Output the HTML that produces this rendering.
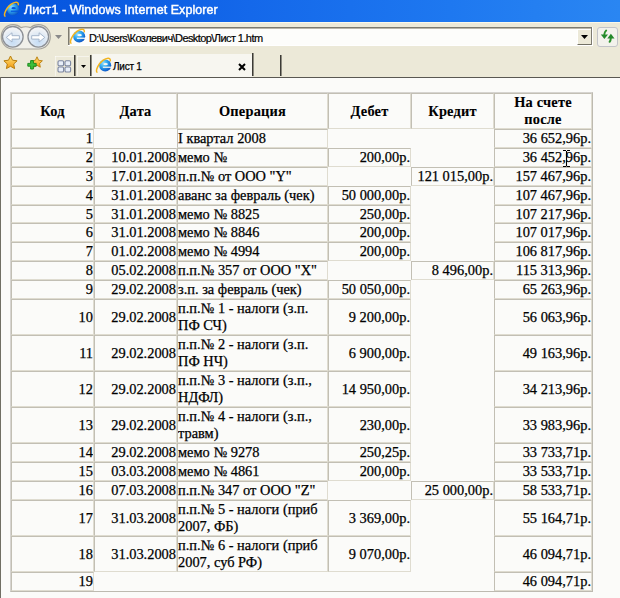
<!DOCTYPE html>
<html><head><meta charset="utf-8">
<style>
html,body{margin:0;padding:0}
body{width:620px;height:598px;overflow:hidden;position:relative;background:#fbfbf9;font-family:"Liberation Sans",sans-serif}
.abs{position:absolute}
#title{left:0;top:0;width:620px;height:22px;background:linear-gradient(90deg,#0554de 0px,#0858e0 70px,#1468ea 250px,#1e78f0 450px,#2a86f2 620px)}
#title .t{left:24px;top:2px;color:#fff;font-weight:normal;-webkit-text-stroke:0.45px #fff;font-size:13px;letter-spacing:0.07px;white-space:nowrap;transform:scaleX(0.96);transform-origin:0 0}
#tb{left:0;top:22px;width:620px;height:55px;background:#ece9d8}
#hl{left:0;top:22px;width:620px;height:1px;background:#fbf8e8}
#frameTop{left:0;top:77px;width:620px;height:1px;background:#5a5852}
#frameLeft{left:0;top:77px;width:1px;height:521px;background:#716f64}
#addr{left:68px;top:27px;width:525px;height:20px;box-sizing:border-box;background:#fdfdfc;border-top:1px solid #7a776a;border-left:1px solid #7a776a;border-bottom:1px solid #fff;border-right:1px solid #fff}
#addrIn{left:69px;top:28px;width:523px;height:17px;box-sizing:border-box;border-top:1px solid #a9a69a;border-left:1px solid #a9a69a}
#addr .t{left:18px;top:3px;font-size:11px;color:#000;white-space:nowrap}
#dd{left:577px;top:29px;width:15px;height:16px;box-sizing:border-box;background:#ece9d8;border-right:1px solid #716f64;border-bottom:1px solid #716f64;border-top:1px solid #fff;border-left:1px solid #fff}
#go{left:598px;top:27px;width:19px;height:20px;box-sizing:border-box;border:1px solid #b8b5a8;border-radius:3px;background:#f4f3ee}
#tab{left:92px;top:54px;width:160px;height:23px;background:#f7f6f0}
#tab .t{left:21px;top:7px;font-size:10px;letter-spacing:-0.25px;color:#000;-webkit-text-stroke:0.25px #000;white-space:nowrap}
.sep{background:#3c3b36;width:1px;border-right:1px solid #8d8b80}
table{position:absolute;left:10px;top:92px;border-collapse:separate;border-spacing:0;empty-cells:hide;border:1px solid;border-color:#d6d4d0 #bdbab0 #bdbab0 #d6d4d0;table-layout:fixed;font-family:"Liberation Serif",serif;font-size:14.4px;color:#000;-webkit-text-stroke:0.25px #000}
td{border:1px solid;border-color:#c2bfb4 #dfdcd0 #dfdcd0 #c2bfb4;padding:0;line-height:17px;text-align:right;vertical-align:middle;overflow:hidden;white-space:nowrap}
td.l{text-align:left;white-space:normal}
th{letter-spacing:0.2px;-webkit-text-stroke:0.1px #000;border:1px solid;border-color:#c2bfb4 #dfdcd0 #dfdcd0 #c2bfb4;padding:0;line-height:17px;text-align:center;font-weight:bold}
tr.s td{height:17px}
tr.d td{height:34px}
tr.s5 td{height:16px;line-height:16px}
tr.h th{height:34px}
</style></head><body>
<svg width="0" height="0" style="position:absolute">
<defs>
<radialGradient id="ieg" cx="0.35" cy="0.3" r="0.75">
<stop offset="0" stop-color="#8fe0ff"/><stop offset="0.45" stop-color="#2fa6ee"/><stop offset="1" stop-color="#0a4fc4"/>
</radialGradient>
<radialGradient id="bg" cx="0.5" cy="0.75" r="0.65">
<stop offset="0" stop-color="#c6ddf5"/><stop offset="0.55" stop-color="#dde8f4"/><stop offset="1" stop-color="#f3f4f6"/>
</radialGradient>
<linearGradient id="starg" x1="0" y1="0" x2="0" y2="1">
<stop offset="0" stop-color="#ffe27a"/><stop offset="1" stop-color="#f39a10"/>
</linearGradient>
<mask id="iem" maskUnits="userSpaceOnUse" x="0" y="0" width="16" height="16">
<rect width="16" height="16" fill="#fff"/>
<ellipse cx="10.0" cy="7.7" rx="2.1" ry="1.05" fill="#000"/>
<rect x="7.4" y="10.0" width="9" height="1.15" fill="#000"/>
</mask>

</defs></svg>
<div id="title" class="abs">
  <svg class="abs" style="left:3px;top:0px" width="17" height="17" viewBox="0 0 16 16">
<circle cx="9.6" cy="9.0" r="5.7" fill="url(#ieg)" mask="url(#iem)"/>
<path d="M1.8 15.2C0.4 13.4 3.2 7.4 7.4 4.2 10.8 1.6 14.6 1.0 14.4 4.4" fill="none" stroke="#f4b41e" stroke-width="1.4" stroke-linecap="round"/>
</svg>
  <div class="abs t">Лист1 - Windows Internet Explorer</div>
</div>
<div id="tb" class="abs"></div>
<div id="hl" class="abs"></div>
<svg class="abs" style="left:0;top:23px" width="54" height="28" viewBox="0 0 54 28">
  <path d="M13 1.6C16.5 1.6 19.5 3.2 21 4.6 23.5 3.7 28 3.7 30.5 4.6 32 3.2 35 1.6 38.6 1.6 45.3 1.6 50.3 7 50.3 13.8 50.3 20.6 45.3 26 38.6 26H13C6.3 26 1.3 20.6 1.3 13.8 1.3 7 6.3 1.6 13 1.6z" fill="#f1f0ea" stroke="#a6a49c" stroke-width="1.2"/>
  <circle cx="12.8" cy="13.8" r="10.3" fill="url(#bg)" stroke="#8c9096" stroke-width="1.3"/>
  <circle cx="38.3" cy="13.8" r="10.3" fill="url(#bg)" stroke="#8c9096" stroke-width="1.3"/>
  <path d="M6.3 14.4L12 9.8V12.7H19.4V16.1H12V19Z" fill="#ffffff" stroke="#9fb0c6" stroke-width="0.9" stroke-linejoin="round"/>
  <path d="M44.8 14.4L39.1 9.8V12.7H31.7V16.1H39.1V19Z" fill="#ffffff" stroke="#9fb0c6" stroke-width="0.9" stroke-linejoin="round"/>
</svg>
<svg class="abs" style="left:55px;top:35px" width="7" height="5"><path d="M0 0h7l-3.5 4z" fill="#8a8a8a"/></svg>
<div class="abs" style="left:68px;top:27px;width:525px;height:19px;background:#fff"></div>
<div class="abs" style="left:68px;top:27px;width:524px;height:1px;background:#7d7b70"></div>
<div class="abs" style="left:68px;top:27px;width:1px;height:18px;background:#7d7b70"></div>
<div class="abs" style="left:69px;top:28px;width:522px;height:1px;background:#b9b6aa"></div>
<div class="abs" style="left:69px;top:28px;width:1px;height:17px;background:#b9b6aa"></div>
<div class="abs" style="left:591px;top:27px;width:1px;height:18px;background:#7d7b70"></div>
<div class="abs" style="left:70px;top:29px;width:507px;height:16px;background:#fdfdfb"></div>
<svg class="abs" style="left:69px;top:27px" width="17" height="17" viewBox="0 0 16 16">
<circle cx="9.6" cy="9.0" r="5.7" fill="url(#ieg)" mask="url(#iem)"/>
<path d="M1.8 15.2C0.4 13.4 3.2 7.4 7.4 4.2 10.8 1.6 14.6 1.0 14.4 4.4" fill="none" stroke="#f4b41e" stroke-width="1.4" stroke-linecap="round"/>
</svg>
<div class="abs" style="left:89px;top:32px;font-size:11px;letter-spacing:-0.58px;white-space:nowrap;color:#000;-webkit-text-stroke:0.2px #000">D:\Users\Козлевич\Desktop\Лист 1.htm</div>
<div class="abs" style="left:577px;top:29px;width:14px;height:16px;box-sizing:border-box;background:#ece9d8;border-left:1px solid #fff;border-top:1px solid #fff;border-bottom:1px solid #716f64"></div>
<svg class="abs" style="left:581px;top:35px" width="8" height="5"><path d="M0 0h7l-3.5 4z" fill="#000"/></svg>
<div class="abs" style="left:597px;top:27px;width:21px;height:20px;box-sizing:border-box;border:1px solid #c3c4c8;border-radius:3px;background:#f3f2ec"></div>
<svg class="abs" style="left:599px;top:29px" width="17" height="16" viewBox="0 0 17 16">
  <path d="M7.2 1.6C6.2 2.4 5.5 3.6 5.3 5.4" fill="none" stroke="#2a922a" stroke-width="1.9" stroke-linecap="round"/>
  <path d="M1.8 5.6h7.2l-3.6 4.5z" fill="#23882a"/>
  <path d="M10.6 12.8C11.2 12.1 11.7 11 11.8 9.2" fill="none" stroke="#2a922a" stroke-width="2" stroke-linecap="round"/>
  <path d="M8.3 9.4h7.2l-3.6-4.7z" fill="#23882a"/>
</svg>
<svg class="abs" style="left:3px;top:55px" width="15" height="15" viewBox="0 0 15 15">
  <path d="M7.5 1l2 4.2 4.6.6-3.4 3.2.9 4.6-4.1-2.3-4.1 2.3.9-4.6L0.9 5.8l4.6-.6z" fill="url(#starg)" stroke="#b87d0c" stroke-width="1"/>
</svg>
<svg class="abs" style="left:27px;top:56px" width="16" height="15" viewBox="0 0 16 15">
  <path d="M10 0.8l1.6 3.5 3.8.5-2.8 2.6.7 3.8-3.3-1.9-3.3 1.9.7-3.8-2.8-2.6 3.8-.5z" fill="url(#starg)" stroke="#b87d0c" stroke-width="0.9"/>
  <path d="M3.6 4.6h2.8v2.8h2.8v2.8H6.4v2.8H3.6v-2.8H0.8V7.4h2.8z" fill="#3cbf3c" stroke="#16861a" stroke-width="0.9"/>
</svg>
<svg class="abs" style="left:57px;top:60px" width="15" height="13" viewBox="0 0 15 13">
  <rect x="1" y="0.7" width="5.6" height="5" rx="1.3" fill="#e8eef8" stroke="#7c86a0" stroke-width="1.1"/>
  <rect x="8" y="0.7" width="5.6" height="5" rx="1.3" fill="#e8eef8" stroke="#7c86a0" stroke-width="1.1"/>
  <rect x="1" y="7" width="5.6" height="5" rx="1.3" fill="#e8eef8" stroke="#7c86a0" stroke-width="1.1"/>
  <rect x="8" y="7" width="5.6" height="5" rx="1.3" fill="#e8eef8" stroke="#7c86a0" stroke-width="1.1"/>
</svg>
<div class="abs sep" style="left:74px;top:55px;height:21px"></div>
<svg class="abs" style="left:81px;top:65px" width="6" height="4"><path d="M0 0h5l-2.5 3z" fill="#000"/></svg>
<div class="abs sep" style="left:90px;top:55px;height:21px"></div>
<div id="tab" class="abs">
  <svg class="abs" style="left:3px;top:2px" width="17" height="17" viewBox="0 0 16 16">
<circle cx="9.6" cy="9.0" r="5.7" fill="url(#ieg)" mask="url(#iem)"/>
<path d="M1.8 15.2C0.4 13.4 3.2 7.4 7.4 4.2 10.8 1.6 14.6 1.0 14.4 4.4" fill="none" stroke="#f4b41e" stroke-width="1.4" stroke-linecap="round"/>
</svg>
  <div class="abs t">Лист 1</div>
  <svg class="abs" style="left:146px;top:9px" width="8" height="8" viewBox="0 0 8 8"><path d="M1 1l6 6M7 1L1 7" stroke="#000" stroke-width="2"/></svg>
</div>
<div class="abs sep" style="left:252px;top:53px;height:23px"></div>
<div class="abs sep" style="left:280px;top:55px;height:21px"></div>
<div class="abs" style="left:55px;top:56px;width:1px;height:20px;background:rgba(255,255,255,0.5)"></div>
<div class="abs" style="left:55px;top:56px;width:19px;height:1px;background:rgba(255,255,255,0.5)"></div>
<div class="abs" style="left:77px;top:56px;width:1px;height:20px;background:rgba(255,255,255,0.5)"></div>
<div class="abs" style="left:77px;top:56px;width:12px;height:1px;background:rgba(255,255,255,0.5)"></div>
<div id="frameTop" class="abs"></div>
<div id="frameLeft" class="abs"></div>

<table>
<colgroup><col style="width:83px"><col style="width:83px"><col style="width:151px"><col style="width:83px"><col style="width:83px"><col style="width:98px"></colgroup>
<tr class="h"><th>Код</th><th>Дата</th><th>Операция</th><th>Дебет</th><th>Кредит</th><th>На счете<br>после</th></tr>
<tr class="s"><td>1</td><td></td><td class="l">I квартал 2008</td><td></td><td></td><td>36 652,96р.</td></tr>
<tr class="s"><td>2</td><td>10.01.2008</td><td class="l">мемо №</td><td>200,00р.</td><td></td><td>36 452,96р.</td></tr>
<tr class="s"><td>3</td><td>17.01.2008</td><td class="l">п.п.№ от ООО "Y"</td><td></td><td>121 015,00р.</td><td>157 467,96р.</td></tr>
<tr class="s"><td>4</td><td>31.01.2008</td><td class="l">аванс за февраль (чек)</td><td>50 000,00р.</td><td></td><td>107 467,96р.</td></tr>
<tr class="s5"><td>5</td><td>31.01.2008</td><td class="l">мемо № 8825</td><td>250,00р.</td><td></td><td>107 217,96р.</td></tr>
<tr class="s"><td>6</td><td>31.01.2008</td><td class="l">мемо № 8846</td><td>200,00р.</td><td></td><td>107 017,96р.</td></tr>
<tr class="s"><td>7</td><td>01.02.2008</td><td class="l">мемо № 4994</td><td>200,00р.</td><td></td><td>106 817,96р.</td></tr>
<tr class="s"><td>8</td><td>05.02.2008</td><td class="l">п.п.№ 357 от ООО "X"</td><td></td><td>8 496,00р.</td><td>115 313,96р.</td></tr>
<tr class="s"><td>9</td><td>29.02.2008</td><td class="l">з.п. за февраль (чек)</td><td>50 050,00р.</td><td></td><td>65 263,96р.</td></tr>
<tr class="d"><td>10</td><td>29.02.2008</td><td class="l">п.п.№ 1 - налоги (з.п.<br>ПФ СЧ)</td><td>9 200,00р.</td><td></td><td>56 063,96р.</td></tr>
<tr class="d"><td>11</td><td>29.02.2008</td><td class="l">п.п.№ 2 - налоги (з.п.<br>ПФ НЧ)</td><td>6 900,00р.</td><td></td><td>49 163,96р.</td></tr>
<tr class="d"><td>12</td><td>29.02.2008</td><td class="l">п.п.№ 3 - налоги (з.п.,<br>НДФЛ)</td><td>14 950,00р.</td><td></td><td>34 213,96р.</td></tr>
<tr class="d"><td>13</td><td>29.02.2008</td><td class="l">п.п.№ 4 - налоги (з.п.,<br>травм)</td><td>230,00р.</td><td></td><td>33 983,96р.</td></tr>
<tr class="s"><td>14</td><td>29.02.2008</td><td class="l">мемо № 9278</td><td>250,25р.</td><td></td><td>33 733,71р.</td></tr>
<tr class="s"><td>15</td><td>03.03.2008</td><td class="l">мемо № 4861</td><td>200,00р.</td><td></td><td>33 533,71р.</td></tr>
<tr class="s"><td>16</td><td>07.03.2008</td><td class="l">п.п.№ 347 от ООО "Z"</td><td></td><td>25 000,00р.</td><td>58 533,71р.</td></tr>
<tr class="d"><td>17</td><td>31.03.2008</td><td class="l">п.п.№ 5 - налоги (приб<br>2007, ФБ)</td><td>3 369,00р.</td><td></td><td>55 164,71р.</td></tr>
<tr class="d"><td>18</td><td>31.03.2008</td><td class="l">п.п.№ 6 - налоги (приб<br>2007, суб РФ)</td><td>9 070,00р.</td><td></td><td>46 094,71р.</td></tr>
<tr class="s"><td>19</td><td></td><td></td><td></td><td></td><td>46 094,71р.</td></tr>
</table>
<svg class="abs" style="left:562px;top:149px;z-index:5" width="9" height="20" viewBox="0 0 9 20">
<path d="M1 1.5h3M5 1.5h3M4.5 2v15.5M1 17.5h3M5 17.5h3" stroke="#000" stroke-width="1.1"/>
</svg>
</body></html>
